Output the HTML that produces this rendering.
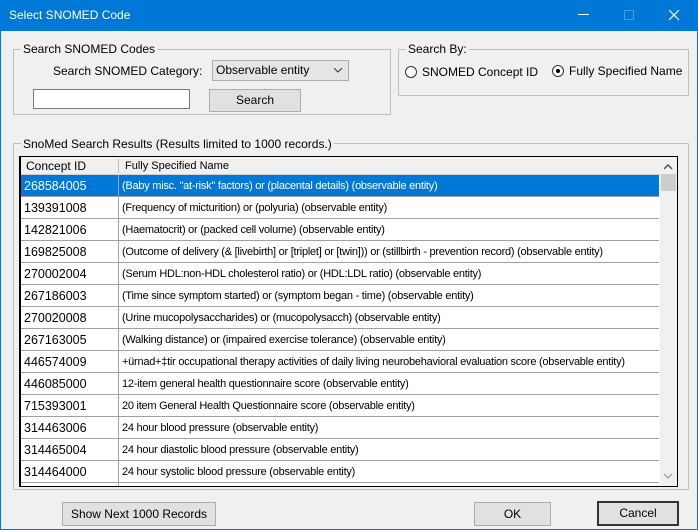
<!DOCTYPE html>
<html><head><style>
*{margin:0;padding:0;box-sizing:border-box}
body{width:698px;height:530px;overflow:hidden;background:#f0f0f0;font-family:"Liberation Sans",sans-serif;font-size:12px;color:#000;position:relative}
.a{position:absolute}
.win{left:0;top:0;width:698px;height:530px;border:1px solid #0078d7;border-top:none}
.title{left:0;top:0;width:698px;height:31px;background:#0078d7;color:#fff;font-size:12px}
.grp{border:1px solid #bfbfbf;border-radius:1px}
.lg{background:#f0f0f0;padding:0 2px;line-height:14px}
.btn{background:#e1e1e1;border:1px solid #adadad;text-align:center;line-height:20px}
.row{left:21px;width:638px;height:22px;border-bottom:1px solid #a0a0a0;background:#fff;font-size:11px;line-height:23px}
.row span{position:absolute;top:0;white-space:nowrap}
.c1{left:3px;font-size:12.5px}
.c2{left:101px;letter-spacing:-0.25px}
.row:after{content:"";position:absolute;left:97px;top:0;width:1px;height:22px;background:#a0a0a0}
.sel{background:#0078d7;color:#fff}
</style></head><body>
<div class="a win"></div>
<div class="a title"><span class="a" style="left:9px;top:8px">Select SNOMED Code</span>
<span class="a" style="left:578px;top:14px;width:11px;height:1px;background:#fff"></span>
<span class="a" style="left:624px;top:10px;width:10px;height:10px;border:1px solid #4a9be0"></span>
<svg class="a" style="left:669px;top:10px" width="11" height="11"><path d="M0 0L10 10M10 0L0 10" stroke="#fff" stroke-width="1.2"/></svg>
</div>

<div class="a grp" style="left:13px;top:49px;width:378px;height:66px"></div>
<div class="a lg" style="left:21px;top:42px">Search SNOMED Codes</div>
<div class="a" style="left:53px;top:64px">Search SNOMED Category:</div>
<div class="a" style="left:212px;top:60px;width:137px;height:21px;background:#e5e5e5;border:1px solid #adadad;line-height:19px;padding-left:3px">Observable entity
<svg class="a" style="left:121px;top:7px" width="9" height="6"><path d="M0 0L4 4L8 0" stroke="#333" fill="none"/></svg></div>
<div class="a" style="left:33px;top:89px;width:157px;height:20px;background:#fff;border:1px solid #7a7a7a"></div>
<div class="a btn" style="left:209px;top:89px;width:92px;height:23px">Search</div>

<div class="a grp" style="left:398px;top:49px;width:291px;height:47px"></div>
<div class="a lg" style="left:406px;top:42px">Search By:</div>
<div class="a" style="left:405px;top:66px;width:12px;height:12px;border-radius:50%;border:1px solid #333;background:#fff"></div>
<div class="a" style="left:422px;top:65px">SNOMED Concept ID</div>
<div class="a" style="left:552px;top:65px;width:12px;height:12px;border-radius:50%;border:1px solid #333;background:#fff"><div class="a" style="left:3px;top:3px;width:4px;height:4px;border-radius:50%;background:#000"></div></div>
<div class="a" style="left:569px;top:64px">Fully Specified Name</div>

<div class="a grp" style="left:13px;top:143px;width:676px;height:347px"></div>
<div class="a lg" style="left:21px;top:137px">SnoMed Search Results (Results limited to 1000 records.)</div>
<div class="a" style="left:19px;top:156px;width:659px;height:331px;border:1px solid #000;border-left:2px solid #000;background:#fff;overflow:hidden">
</div>
<div class="a" style="left:21px;top:157px;width:639px;height:18px;background:#f0f0f0;border-bottom:1px solid #d0d0d0;font-size:12px;line-height:19px">
<span class="a" style="left:5px">Concept ID</span><span class="a" style="left:97px;top:2px;width:1px;height:14px;background:#c0c0c0"></span><span class="a" style="left:104px;font-size:11px">Fully Specified Name</span></div>
<div class="a" style="left:21px;top:175px;width:639px;height:311px;overflow:hidden">
<div style="position:relative;left:-21px">
<div class="a row sel" style="top:0"><span class="c1">268584005</span><span class="c2">(Baby misc. "at-risk" factors) or (placental details) (observable entity)</span></div>
<div class="a row" style="top:22px"><span class="c1">139391008</span><span class="c2">(Frequency of micturition) or (polyuria) (observable entity)</span></div>
<div class="a row" style="top:44px"><span class="c1">142821006</span><span class="c2">(Haematocrit) or (packed cell volume) (observable entity)</span></div>
<div class="a row" style="top:66px"><span class="c1">169825008</span><span class="c2">(Outcome of delivery (&amp; [livebirth] or [triplet] or [twin])) or (stillbirth - prevention record) (observable entity)</span></div>
<div class="a row" style="top:88px"><span class="c1">270002004</span><span class="c2">(Serum HDL:non-HDL cholesterol ratio) or (HDL:LDL ratio) (observable entity)</span></div>
<div class="a row" style="top:110px"><span class="c1">267186003</span><span class="c2">(Time since symptom started) or (symptom began - time) (observable entity)</span></div>
<div class="a row" style="top:132px"><span class="c1">270020008</span><span class="c2">(Urine mucopolysaccharides) or (mucopolysacch) (observable entity)</span></div>
<div class="a row" style="top:154px"><span class="c1">267163005</span><span class="c2">(Walking distance) or (impaired exercise tolerance) (observable entity)</span></div>
<div class="a row" style="top:176px"><span class="c1">446574009</span><span class="c2">+ürnad+‡tir occupational therapy activities of daily living neurobehavioral evaluation score (observable entity)</span></div>
<div class="a row" style="top:198px"><span class="c1">446085000</span><span class="c2">12-item general health questionnaire score (observable entity)</span></div>
<div class="a row" style="top:220px"><span class="c1">715393001</span><span class="c2">20 item General Health Questionnaire score (observable entity)</span></div>
<div class="a row" style="top:242px"><span class="c1">314463006</span><span class="c2">24 hour blood pressure (observable entity)</span></div>
<div class="a row" style="top:264px"><span class="c1">314465004</span><span class="c2">24 hour diastolic blood pressure (observable entity)</span></div>
<div class="a row" style="top:286px"><span class="c1">314464000</span><span class="c2">24 hour systolic blood pressure (observable entity)</span></div>
<div class="a row" style="top:308px"><span class="c1"></span></div>
</div></div>
<div class="a" style="left:660px;top:157px;width:17px;height:329px;background:#f0f0f0">
<svg class="a" style="left:4px;top:7px" width="9" height="6"><path d="M0 5L4 1L8 5" stroke="#555" stroke-width="1.5" fill="none"/></svg>
<div class="a" style="left:1px;top:17px;width:15px;height:17px;background:#cdcdcd"></div>
<svg class="a" style="left:4px;top:316px" width="9" height="6"><path d="M0 1L4 5L8 1" stroke="#999" stroke-width="1.2" fill="none"/></svg>
</div>

<div class="a btn" style="left:62px;top:502px;width:154px;height:24px;line-height:22px">Show Next 1000 Records</div>
<div class="a btn" style="left:474px;top:502px;width:77px;height:24px;line-height:22px">OK</div>
<div class="a btn" style="left:597px;top:501px;width:82px;height:25px;border:2px solid #333;line-height:21px">Cancel</div>
</body></html>
